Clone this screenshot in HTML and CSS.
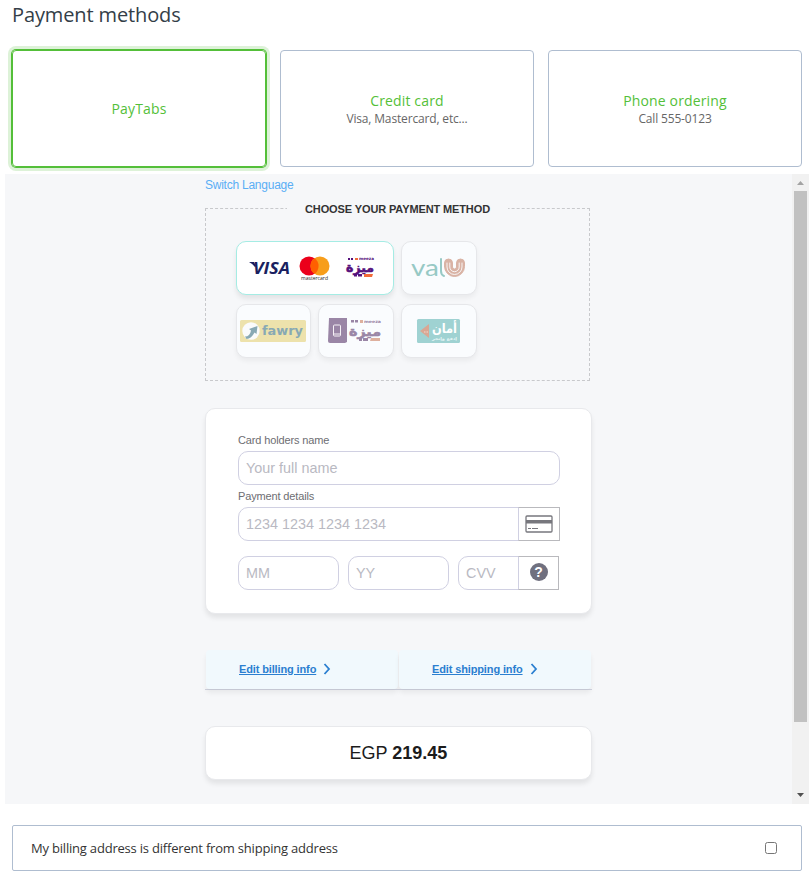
FILE: index.html
```
<!DOCTYPE html>
<html lang="en">
<head>
<meta charset="UTF-8">
<meta name="viewport" content="width=device-width, initial-scale=1.0">
<title>Payment methods</title>
<link rel="stylesheet" href="styles.css">
</head>
<body>

  <h1 class="title">Payment methods</h1>

  <div class="methods">
    <div class="method selected"><span class="method-name">PayTabs</span></div>
    <div class="method"><span class="method-name">Credit card</span><span class="method-info">Visa, Mastercard, etc...</span></div>
    <div class="method"><span class="method-name">Phone ordering</span><span class="method-info">Call 555-0123</span></div>
  </div>

  <div class="frame">
    <div class="paypage">
      <a class="lang">Switch Language</a>

      <fieldset class="choose">
        <legend>CHOOSE YOUR PAYMENT METHOD</legend>
        <div class="tiles">
          <div class="tile wide active">
            <svg width="156" height="52" viewBox="0 0 156 52">
              <!-- visa -->
              <path d="M12 20h5l2 4-1 1q-2-3-6-5z" fill="#1a1f60"/>
              <text x="16" y="32" class="visa" textLength="37" lengthAdjust="spacingAndGlyphs">VISA</text>
              <!-- mastercard -->
              <circle cx="72" cy="24" r="9.5" fill="#eb001b"/>
              <circle cx="83" cy="24" r="9.5" fill="#f79e1b"/>
              <path d="M77.5 16.200a9.500 9.500 0 0 1 0 15.600a9.500 9.500 0 0 1 0-15.600z" fill="#ff5f00"/>
              <text x="64" y="38" class="mc" textLength="27" lengthAdjust="spacingAndGlyphs">mastercard</text>
              <!-- meeza -->
              <g fill="#55117c" stroke="#55117c">
                <text x="109" y="30" class="meeza" textLength="28" lengthAdjust="spacingAndGlyphs">ميزة</text>
                <text x="122" y="18" class="meeza-en" textLength="15" lengthAdjust="spacingAndGlyphs">meeza</text>
                <path d="M111 16h2v2h-2zM114 16h2v2h-2zM117 32h3v2.500h-3zM121 32h4v2.500h-4z" stroke="none"/>
              </g>
              <path d="M118 16h3v2h-3zM127 32h9l-1 3h-8z" fill="#f26b3a"/>
            </svg>
          </div>
          <div class="tile">
            <svg width="74" height="52" viewBox="0 0 74 52" fill="none" stroke-linecap="round" stroke-linejoin="round">
              <text x="9" y="34" class="valu" textLength="28" lengthAdjust="spacingAndGlyphs">va</text>
              <path d="M39 17v12q0 4 3 5" stroke="#97c9c5" stroke-width="2"/>
              <path d="M42.500 24.500v-3.500a4 4 0 0 1 8 0v4a2 2 0 0 0 4 0v-4a4 4 0 0 1 8 0v3.500a10 10 0 0 1-20 0z" fill="#d9b3a5" stroke="#d9b3a5"/>
              <path d="M45 21v4a7.500 7.500 0 0 0 15 0v-4M47.800 21v4a4.700 4.700 0 0 0 9.400 0v-4" stroke="#fafcfe" stroke-width=".9"/>
            </svg>
          </div>
          <div class="tile">
            <svg width="73" height="52" viewBox="0 0 73 52">
              <rect x="3" y="15" width="66" height="22" rx="1.500" fill="#ede2ac"/>
              <circle cx="14" cy="26" r="8.700" fill="#fafbfc"/>
              <path d="M8 31.500q5 0 6-6l-2-1.500 8.500-3-1 8-2-1.500q-3 6-8 6.500z" fill="#88a9b4"/>
              <text x="25" y="30" class="fawry" textLength="41" lengthAdjust="spacingAndGlyphs">fawry</text>
            </svg>
          </div>
          <div class="tile">
            <svg width="74" height="52" viewBox="0 0 74 52">
              <path d="M10 13h18v24l-2 1H11q-2 0-2-2z" fill="#9a86a6"/>
              <rect x="14.500" y="20" width="7" height="11" rx="1" fill="none" stroke="#f5f1f6"/>
              <path d="M15 29h6" stroke="#f5f1f6"/>
              <g fill="#9a86a6" stroke="#9a86a6">
                <text x="30" y="31" class="meeza" textLength="32" lengthAdjust="spacingAndGlyphs">ميزة</text>
                <text x="45" y="18" class="meeza-en" textLength="17" lengthAdjust="spacingAndGlyphs">meeza</text>
                <path d="M32 15h3v2.500h-3zM36 15h3v2.500h-3zM40 33h3v3h-3zM44 33h5v3h-5z" stroke="none"/>
              </g>
              <path d="M41 15h3v3h-3zM52 33h9v3h-10z" fill="#deb09e"/>
            </svg>
          </div>
          <div class="tile">
            <svg width="74" height="52" viewBox="0 0 74 52">
              <rect x="15" y="14" width="43" height="24" rx="1.500" fill="#9fd2d2"/>
              <path d="M18 26l9-7v14z" fill="#d9a794"/>
              <path d="M22 27h4" stroke="#f0d9cf" stroke-dasharray="1 .5"/>
              <text x="30" y="28" class="aman" textLength="25" lengthAdjust="spacingAndGlyphs">أمان</text>
              <text x="30" y="35" class="aman-sub" textLength="25" lengthAdjust="spacingAndGlyphs">إدفع وإنجز</text>
            </svg>
          </div>
        </div>
      </fieldset>

      <div class="card-form">
        <label class="label">Card holders name</label>
        <input class="input" type="text" placeholder="Your full name">
        <label class="label second">Payment details</label>
        <div class="group">
          <input class="input joined" type="text" placeholder="1234 1234 1234 1234">
          <span class="addon">
            <svg width="28" height="18" viewBox="0 0 28 18">
              <rect x="1" y="1" width="26" height="16" rx="1" fill="none" stroke="#77777d" stroke-width="1.300"/>
              <path d="M1 5h26v3.500H1z" fill="#77777d"/>
              <path d="M3 13.500h3M7 13.500h6" stroke="#77777d"/>
            </svg>
          </span>
        </div>
        <div class="expiry">
          <input class="input" type="text" placeholder="MM">
          <input class="input" type="text" placeholder="YY">
          <div class="group">
            <input class="input joined" type="text" placeholder="CVV">
            <span class="addon"><span class="help">?</span></span>
          </div>
        </div>
      </div>

      <div class="edit-links">
        <div class="edit"><a>Edit billing info</a><svg width="8" height="12" viewBox="0 0 8 12"><path d="M1.500 1l4.500 5-4.500 5"/></svg></div>
        <div class="edit"><a>Edit shipping info</a><svg width="8" height="12" viewBox="0 0 8 12"><path d="M1.500 1l4.500 5-4.500 5"/></svg></div>
      </div>

      <div class="total"><span>EGP <b>219.45</b></span></div>
    </div>

    <div class="scrollbar">
      <svg width="17" height="17" viewBox="0 0 17 17"><path d="M5 11l3.500-4 3.500 4z" fill="#a3a3a3"/></svg>
      <div class="thumb"></div>
      <svg width="17" height="17" viewBox="0 0 17 17"><path d="M5 6l3.500 4L12 6z" fill="#505050"/></svg>
    </div>
  </div>

  <label class="billing">
    My billing address is different from shipping address
    <input type="checkbox">
  </label>

</body>
</html>
```
FILE: styles.css
```
* {
  box-sizing: border-box;
}

body {
  margin: 0;
  height: 876px;
  overflow: hidden;
  background: #fff;
  font-family: "Open Sans", sans-serif;
}

.title {
  margin: 0;
  padding: 1px 0 0 12px;
  height: 50px;
  font-size: 20px;
  line-height: 28px;
  font-weight: 400;
  letter-spacing: -.12px;
  color: #333e48;
}

/* Payment method boxes */
.methods {
  display: flex;
  gap: 14px;
  padding: 0 9px 0 12px;
}

.method {
  flex: 1;
  height: 117px;
  display: flex;
  flex-direction: column;
  align-items: center;
  justify-content: center;
  border: 1px solid #afbdd0;
  border-radius: 4px;
}

.method.selected {
  border-color: #54bf39;
  box-shadow: 0 0 0 1px #54bf39, 0 0 0 4px #ddf2d8;
}

.method-name {
  font-size: 14px;
  line-height: 19px;
  letter-spacing: .14px;
  color: #54bf39;
}

.method-info {
  font-size: 12px;
  line-height: 17px;
  letter-spacing: -.16px;
  color: #666;
}

/* Embedded payment page */
.frame {
  display: flex;
  justify-content: space-between;
  height: 630px;
  margin: 7px 2px 0 5px;
  background: #f6f7f9;
  font-family: "Liberation Sans", Arial, sans-serif;
}

.paypage {
  width: 387px;
  margin-left: 200px;
}

.lang {
  display: block;
  height: 28px;
  padding-top: 4px;
  font-size: 12px;
  line-height: 15px;
  letter-spacing: -.24px;
  color: #5aaef5;
}

.choose {
  width: 385px;
  height: 179px;
  margin: 0;
  padding: 26px 30px 0;
  border: 1px dashed #c8c9cc;
}

.choose legend {
  margin: 0 auto;
  padding: 2px 18px 0;
  font-size: 11px;
  line-height: 11px;
  letter-spacing: -.12px;
  font-weight: bold;
  color: #333;
}

.tiles {
  display: flex;
  flex-wrap: wrap;
  gap: 9px 7px;
  width: 242px;
}

.tile {
  width: 76px;
  height: 54px;
  border: 1px solid #e6e7ea;
  border-radius: 10px;
  background: #fafcfe;
  box-shadow: 0 3px 5px rgba(0, 0, 0, .05);
}

.tile:nth-child(3) {
  width: 75px;
}

.tile.wide {
  width: 158px;
}

.tile.active {
  border-color: #a5ece4;
  background: #fff;
  box-shadow: 0 4px 5px rgba(0, 0, 0, .08);
}

.tile svg {
  display: block;
}

/* Logo lettering */
.visa {
  font: italic bold 16.500px "Open Sans", sans-serif;
  fill: #1a1f60;
}

.mc {
  font: 5px "Open Sans", sans-serif;
  fill: #222;
}

.meeza {
  font: bold 12px "DejaVu Sans", sans-serif;
  stroke-width: .6px;
}

.meeza-en {
  font: bold 4px "DejaVu Sans", sans-serif;
  stroke: none;
}

.valu {
  font: 24px Lato, sans-serif;
  fill: #97c9c5;
}

.fawry {
  font: bold 13px "DejaVu Sans", sans-serif;
  fill: #88a9b4;
}

.aman {
  font: bold 13px "DejaVu Sans", sans-serif;
  fill: #fff;
}

.aman-sub {
  font: bold 4px "DejaVu Sans", sans-serif;
  fill: #e8f7f7;
}

/* Card form */
.card-form {
  height: 206px;
  margin-top: 27px;
  padding: 25px 31px 0 32px;
  border: 1px solid #e8e9ec;
  border-radius: 10px;
  background: #fff;
  box-shadow: 0 4px 5px rgba(0, 0, 0, .08);
}

.label {
  display: block;
  height: 17px;
  font-size: 11px;
  line-height: 13px;
  letter-spacing: -.14px;
  color: #6d6d72;
}

.label.second {
  margin-top: 5px;
}

.input {
  display: block;
  width: 322px;
  height: 34px;
  padding: 0 7px;
  border: 1px solid #d0d0e2;
  border-radius: 10px;
  background: #fff;
  font: 14.400px "Liberation Sans", Arial, sans-serif;
}

.input::placeholder {
  color: #b9b9c2;
}

.group {
  display: flex;
  width: 322px;
}

.input.joined {
  flex: 1;
  min-width: 0;
  width: 0;
  border-radius: 10px 0 0 10px;
}

.addon {
  display: flex;
  align-items: center;
  justify-content: center;
  width: 42px;
  margin-left: -1px;
  border: 1px solid #b9b9bd;
  border-left-color: #d0d0e2;
}

.expiry {
  display: flex;
  gap: 9px;
  margin-top: 15px;
}

.expiry > .input,
.expiry > .group {
  width: 101px;
}

.expiry .addon {
  width: 41px;
}

.help {
  width: 18px;
  height: 18px;
  margin-bottom: 2px;
  border-radius: 50%;
  background: #70707f;
  color: #fff;
  font-size: 14px;
  line-height: 18px;
  font-weight: bold;
  text-align: center;
}

.edit-links {
  display: flex;
  gap: 1px;
  margin-top: 36px;
  padding: 0 1px;
  border-bottom: 1px solid #d0d3df;
}

.edit {
  flex: 1;
  display: flex;
  align-items: center;
  gap: 7px;
  height: 39px;
  padding: 0 0 2px 33px;
  border-radius: 4px;
  background: #f1f9fd;
  box-shadow: 0 4px 5px rgba(0, 0, 0, .06);
  font-size: 11px;
  letter-spacing: -.13px;
  font-weight: bold;
  color: #2b7fd0;
  text-decoration: underline;
}

.edit svg {
  fill: none;
  stroke: #2b7fd0;
  stroke-width: 1.800;
}

.total {
  display: flex;
  align-items: center;
  justify-content: center;
  height: 54px;
  margin-top: 36px;
  border: 1px solid #e8e9ec;
  border-radius: 10px;
  background: #fff;
  box-shadow: 0 4px 5px rgba(0, 0, 0, .08);
  font-size: 18px;
  color: #1c1c1c;
}

.scrollbar {
  display: flex;
  flex-direction: column;
  justify-content: space-between;
  width: 17px;
  background: #f1f1f1;
}

.thumb {
  width: 13px;
  height: 531px;
  margin: 0 2px auto;
  background: #c1c1c1;
}

/* Billing address toggle */
.billing {
  display: flex;
  align-items: center;
  justify-content: space-between;
  height: 46px;
  margin: 21px 9px 0 12px;
  padding: 0 24px 0 18px;
  border: 1px solid #afbdd0;
  border-radius: 2px;
  font-size: 13px;
  letter-spacing: -.2px;
  color: #333;
}

.billing input {
  width: 12px;
  height: 12px;
  margin: 0;
}
```
